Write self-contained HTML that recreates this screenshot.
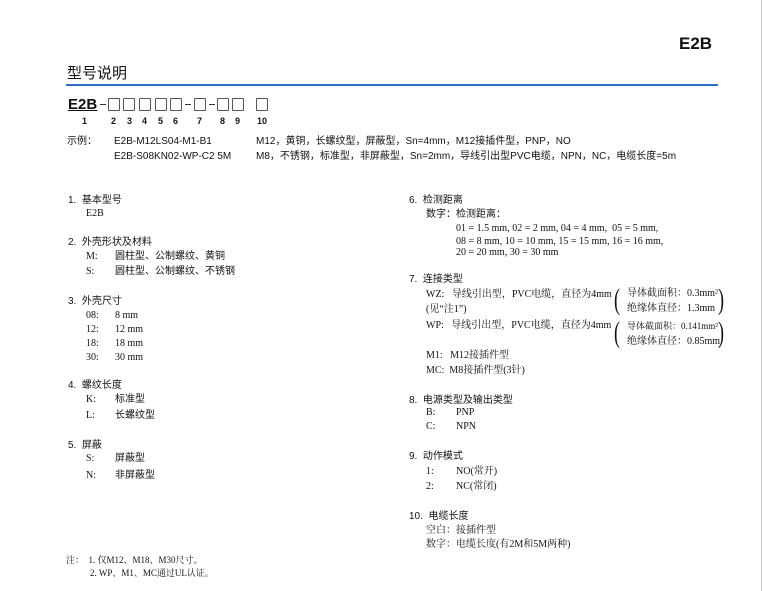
<!DOCTYPE html><html><head><meta charset="utf-8"><style>
body{margin:0;width:763px;height:591px;background:#fff;position:relative;overflow:hidden;font-family:"Liberation Sans","Noto Sans CJK SC",sans-serif;color:#111}
.a{position:absolute;white-space:nowrap;font-size:10px;line-height:12px}
.s{font-family:"Liberation Serif","Noto Serif CJK SC",serif}
.b{width:12px;height:13px;border:1px solid #555;border-radius:1px;position:absolute;top:98px;box-sizing:border-box}
.d{position:absolute;top:104px;width:6px;height:1px;background:#333}
.n{position:absolute;top:116px;font-size:9px;font-weight:bold}
.p{position:absolute;font-size:30px;line-height:30px;font-family:"Liberation Serif",serif;transform:scaleX(.6)}
</style></head><body>
<div style="position:absolute;right:1px;top:0;width:1px;height:591px;background:#ccc"></div>
<div class="a" style="left:679px;top:34px;font-size:17px;line-height:20px;font-weight:bold">E2B</div>
<div class="a" style="left:67px;top:65px;font-size:15px;line-height:18px">型号说明</div>
<div style="position:absolute;left:66px;top:84px;width:652px;height:2px;background:#2f6ec0"></div>
<div class="a" style="left:68px;top:96px;font-size:15px;line-height:17px;font-weight:bold;text-decoration:underline">E2B</div>
<div class="d" style="left:100px"></div>
<div class="b" style="left:108px"></div><div class="b" style="left:123px"></div><div class="b" style="left:139px"></div><div class="b" style="left:155px"></div><div class="b" style="left:170px"></div>
<div class="d" style="left:185px"></div>
<div class="b" style="left:194px"></div>
<div class="d" style="left:209px"></div>
<div class="b" style="left:217px"></div><div class="b" style="left:232px"></div><div class="b" style="left:256px"></div>
<div class="n" style="left:82px">1</div><div class="n" style="left:111px">2</div><div class="n" style="left:127px">3</div><div class="n" style="left:142px">4</div><div class="n" style="left:158px">5</div><div class="n" style="left:173px">6</div><div class="n" style="left:197px">7</div><div class="n" style="left:220px">8</div><div class="n" style="left:235px">9</div><div class="n" style="left:257px">10</div>
<div class="a" style="left:67px;top:136px">示例：</div>
<div class="a" style="left:114px;top:136px">E2B-M12LS04-M1-B1</div>
<div class="a" style="left:114px;top:151px">E2B-S08KN02-WP-C2 5M</div>
<div class="a" style="left:256px;top:136px">M12，黄铜，长螺纹型，屏蔽型，Sn=4mm，M12接插件型，PNP，NO</div>
<div class="a" style="left:256px;top:151px">M8，不锈钢，标准型，非屏蔽型，Sn=2mm，导线引出型PVC电缆，NPN，NC，电缆长度=5m</div>

<div class="a" style="left:68px;top:195px">1.&nbsp; 基本型号</div>
<div class="a s" style="left:86px;top:208px">E2B</div>
<div class="a" style="left:68px;top:237px">2.&nbsp; 外壳形状及材料</div>
<div class="a s" style="left:86px;top:251px">M:</div><div class="a" style="left:115px;top:251px">圆柱型、公制螺纹、黄铜</div>
<div class="a s" style="left:86px;top:266px">S:</div><div class="a" style="left:115px;top:266px">圆柱型、公制螺纹、不锈钢</div>
<div class="a" style="left:68px;top:296px">3.&nbsp; 外壳尺寸</div>
<div class="a s" style="left:86px;top:310px">08:</div><div class="a s" style="left:115px;top:310px">8 mm</div>
<div class="a s" style="left:86px;top:324px">12:</div><div class="a s" style="left:115px;top:324px">12 mm</div>
<div class="a s" style="left:86px;top:338px">18:</div><div class="a s" style="left:115px;top:338px">18 mm</div>
<div class="a s" style="left:86px;top:352px">30:</div><div class="a s" style="left:115px;top:352px">30 mm</div>
<div class="a" style="left:68px;top:380px">4.&nbsp; 螺纹长度</div>
<div class="a s" style="left:86px;top:394px">K:</div><div class="a" style="left:115px;top:394px">标准型</div>
<div class="a s" style="left:86px;top:410px">L:</div><div class="a" style="left:115px;top:410px">长螺纹型</div>
<div class="a" style="left:68px;top:440px">5.&nbsp; 屏蔽</div>
<div class="a s" style="left:86px;top:453px">S:</div><div class="a" style="left:115px;top:453px">屏蔽型</div>
<div class="a s" style="left:86px;top:470px">N:</div><div class="a" style="left:115px;top:470px">非屏蔽型</div>

<div class="a" style="left:409px;top:195px">6.&nbsp; 检测距离</div>
<div class="a" style="left:426px;top:209px">数字：检测距离：</div>
<div class="a s" style="left:456px;top:223px">01 = 1.5 mm, 02 = 2 mm, 04 = 4 mm,&nbsp; 05 = 5 mm,</div>
<div class="a s" style="left:456px;top:236px">08 = 8 mm, 10 = 10 mm, 15 = 15 mm, 16 = 16 mm,</div>
<div class="a s" style="left:456px;top:247px">20 = 20 mm, 30 = 30 mm</div>
<div class="a" style="left:409px;top:274px">7.&nbsp; 连接类型</div>
<div class="a s" style="left:426px;top:289px">WZ:&nbsp;&nbsp; 导线引出型，PVC电缆，直径为4mm</div>
<div class="a s" style="left:426px;top:304px">(见“注1”)</div>
<div class="a s" style="left:426px;top:320px">WP:&nbsp;&nbsp; 导线引出型，PVC电缆，直径为4mm</div>
<div class="p" style="left:612px;top:285px">(</div><div class="p" style="left:716px;top:285px">)</div>
<div class="p" style="left:612px;top:318px">(</div><div class="p" style="left:716px;top:318px">)</div>
<div class="a s" style="left:627px;top:288px">导体截面积：0.3mm²</div>
<div class="a s" style="left:627px;top:303px">绝缘体直径：1.3mm</div>
<div class="a s" style="left:627px;top:320px;font-size:9px">导体截面积：0.141mm²</div>
<div class="a s" style="left:627px;top:336px">绝缘体直径：0.85mm</div>
<div class="a s" style="left:426px;top:350px">M1:&nbsp;&nbsp; M12接插件型</div>
<div class="a s" style="left:426px;top:365px">MC:&nbsp; M8接插件型(3针)</div>
<div class="a" style="left:409px;top:395px">8.&nbsp; 电源类型及输出类型</div>
<div class="a s" style="left:426px;top:407px">B:</div><div class="a s" style="left:456px;top:407px">PNP</div>
<div class="a s" style="left:426px;top:421px">C:</div><div class="a s" style="left:456px;top:421px">NPN</div>
<div class="a" style="left:409px;top:451px">9.&nbsp; 动作模式</div>
<div class="a s" style="left:426px;top:466px">1:</div><div class="a s" style="left:456px;top:466px">NO(常开)</div>
<div class="a s" style="left:426px;top:481px">2:</div><div class="a s" style="left:456px;top:481px">NC(常闭)</div>
<div class="a" style="left:409px;top:511px">10.&nbsp; 电缆长度</div>
<div class="a s" style="left:426px;top:525px">空白：接插件型</div>
<div class="a s" style="left:426px;top:539px">数字：电缆长度(有2M和5M两种)</div>

<div class="a s" style="left:66px;top:554px;font-size:9px">注：&nbsp; 1. 仅M12、M18、M30尺寸。</div>
<div class="a s" style="left:90px;top:567px;font-size:9px">2. WP、M1、MC通过UL认证。</div>
</body></html>
